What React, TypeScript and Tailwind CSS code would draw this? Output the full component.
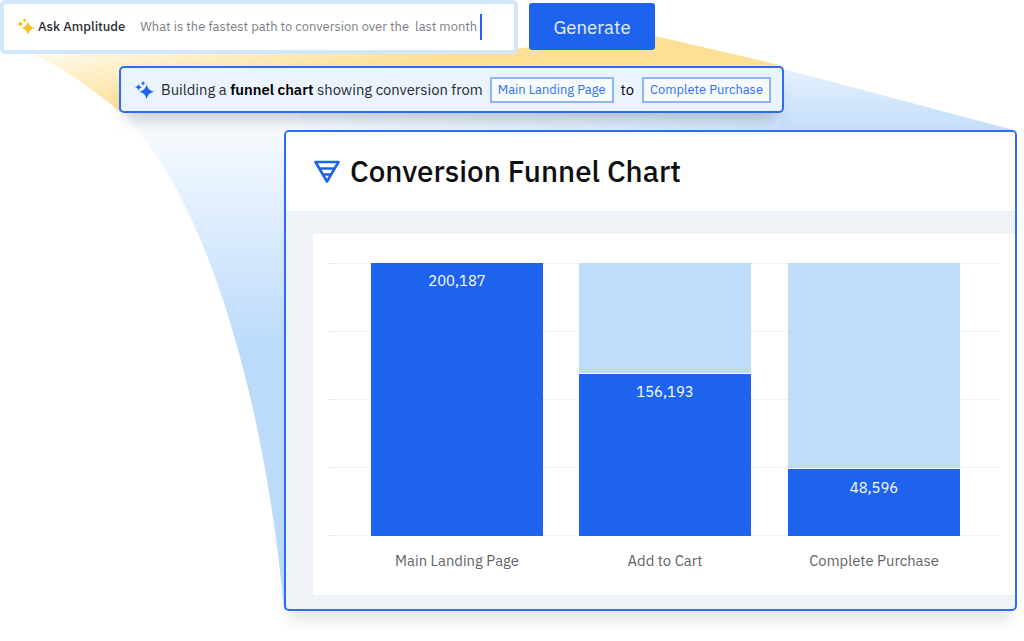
const font = "font-['IBM_Plex_Sans','Noto_Sans',sans-serif]";

// four-pointed star with concave sides
function star(cx: number, cy: number, r: number) {
  const k = r * 0.16;
  return (
    `M${cx} ${cy - r} Q${cx + k} ${cy - k} ${cx + r} ${cy} ` +
    `Q${cx + k} ${cy + k} ${cx} ${cy + r} ` +
    `Q${cx - k} ${cy + k} ${cx - r} ${cy} ` +
    `Q${cx - k} ${cy - k} ${cx} ${cy - r} Z`
  );
}

function Sparkles({ color, size }: { color: string; size: number }) {
  return (
    <svg width={size} height={size} viewBox="0 0 21 21" className="shrink-0">
      <path d={star(12.8, 11.8, 8)} fill={color} />
      <path d={star(3.9, 6.9, 3.7)} fill={color} />
      <path d={star(8.9, 2.6, 2.6)} fill={color} />
    </svg>
  );
}

function FunnelIcon() {
  return (
    <svg width="28" height="24" viewBox="0 0 28 24" className="shrink-0">
      <path d="M2.5 2 H25.5 L14 21.5 Z" fill="none" stroke="#1d63ed" strokeWidth="2.6" strokeLinejoin="round" />
      <path d="M6.5 8.5 H21.5 M10 14.5 H18" stroke="#1d63ed" strokeWidth="2.4" />
    </svg>
  );
}

function Tag({ children }: { children: string }) {
  return (
    <span className="flex h-[26px] items-center border-2 border-[#8fb4f7] bg-white/60 px-[6px] text-[12.9px] text-[#2f6fee]">
      {children}
    </span>
  );
}

function Bar({ label, value, pale, pad }: { label: string; value: string; pale: string; pad: string }) {
  return (
    <div className="flex w-[172px] flex-col">
      <div className="flex h-[273px] flex-col">
        <div className={`${pale} bg-[#bfdcfb]`} />
        <div className={`${pad} flex-1 border-white bg-[#1d63ed] text-center text-[14.8px] leading-[20px] text-white`}>
          {value}
        </div>
      </div>
      <div className="mt-[14px] text-center text-[14.8px] text-[#5f6368]">{label}</div>
    </div>
  );
}

export default function App() {
  return (
    <div className={`relative h-[641px] w-[1024px] overflow-hidden bg-white ${font}`}>
      {/* the two cones behind the cards */}
      <svg width="1024" height="641" className="absolute left-0 top-0">
        <defs>
          <linearGradient id="yellow" x1="0" y1="64" x2="10" y2="127" gradientUnits="userSpaceOnUse">
            <stop offset="0" stopColor="#fff8e6" />
            <stop offset="1" stopColor="#fde096" />
          </linearGradient>
          <linearGradient id="blue" x1="0" y1="100" x2="0" y2="345" gradientUnits="userSpaceOnUse">
            <stop offset="0" stopColor="#ffffff" />
            <stop offset="1" stopColor="#bcdbfb" />
          </linearGradient>
          <linearGradient id="blueRight" x1="0" y1="66" x2="0" y2="132" gradientUnits="userSpaceOnUse">
            <stop offset="0" stopColor="#e6f1fd" />
            <stop offset="1" stopColor="#c3defb" />
          </linearGradient>
          <linearGradient id="blueMiddle" x1="300" y1="0" x2="784" y2="0" gradientUnits="userSpaceOnUse">
            <stop offset="0" stopColor="#f6faff" />
            <stop offset="1" stopColor="#cfe4fb" />
          </linearGradient>
        </defs>
        <path d="M25 50 C60 66 92 88 120 112 L784 112 L784 66 L655 36 L500 50 Z" fill="url(#yellow)" />
        <path d="M120 112 C195 180 262 370 284 610 L300 610 L300 112 Z" fill="url(#blue)" />
        <path d="M300 112 H784 V132 H300 Z" fill="url(#blueMiddle)" />
        <path d="M780 68 L1017 131 L780 131 Z" fill="url(#blueRight)" />
      </svg>

      <div className="relative flex flex-col">
        <div className="flex items-start gap-[11px]">
          <div className="flex h-[54px] w-[518px] items-center rounded-[5px] border-[4px] border-[#d3e7fa] bg-white pl-[13px]">
            <Sparkles color="#f8c01e" size={18} />
            <span className="ml-[3px] text-[13px] font-medium text-[#2b2f33]">Ask Amplitude</span>
            <span className="ml-[15px] text-[12.96px] text-[#7d7f83]">What is the fastest path to conversion over the&nbsp; last month</span>
            <span className="ml-[3px] h-[26px] w-[2px] bg-[#1d63ed]" />
          </div>
          <button className="mt-[3px] h-[47px] w-[126px] rounded-[3px] bg-[#1d63ed] pt-[2px] text-[18.6px] text-[#e8f0ff]">Generate</button>
        </div>

        <div className="ml-[119px] mt-[12px] flex h-[47px] w-[665px] items-center rounded-[5px] border-2 border-[#2d6df0] bg-[#ebf4fe] pl-[14px] pt-[1px] text-[14.8px] text-[#26292d] shadow-[0_14px_16px_-8px_rgba(90,100,120,0.35)]">
          <Sparkles color="#1d63ed" size={19} />
          <span className="ml-[7px]">Building a <b className="font-semibold text-black">funnel chart</b> showing conversion from</span>
          <span className="ml-[7px]"><Tag>Main Landing Page</Tag></span>
          <span className="ml-[7px] mr-[8px] text-black">to</span>
          <Tag>Complete Purchase</Tag>
        </div>

        <div className="ml-[284px] mt-[17px] flex h-[481px] w-[733px] flex-col overflow-hidden rounded-[5px] border-2 border-[#2d6df0] bg-[#eff3f8] shadow-[0_16px_12px_-6px_rgba(90,100,120,0.16)]">
          <div className="flex h-[79px] items-center gap-[9px] bg-white pl-[27px]">
            <FunnelIcon />
            <h1 className="text-[29.5px] font-medium text-[#0d0f12]">Conversion Funnel Chart</h1>
          </div>
          <div className="ml-[27px] mt-[23px] h-[361px] bg-white pt-[29px]">
            <div className="relative ml-[58px] flex gap-[36px]">
              <div className="absolute -left-[43px] top-0 flex h-[273px] w-[672px] flex-col justify-between">
                <div className="border-t border-dotted border-[#dfe1e4]" />
                <div className="border-t border-dotted border-[#dfe1e4]" />
                <div className="border-t border-dotted border-[#dfe1e4]" />
                <div className="border-t border-dotted border-[#dfe1e4]" />
                <div className="border-t border-dotted border-[#dfe1e4]" />
              </div>
              <div className="relative">
                <Bar label="Main Landing Page" value="200,187" pale="h-0" pad="pt-[8px]" />
              </div>
              <div className="relative">
                <Bar label="Add to Cart" value="156,193" pale="h-[110px]" pad="border-t pt-[8px]" />
              </div>
              <div className="relative ml-[1px]">
                <Bar label="Complete Purchase" value="48,596" pale="h-[205px]" pad="border-t pt-[9px]" />
              </div>
            </div>
          </div>
        </div>
      </div>
    </div>
  );
}
